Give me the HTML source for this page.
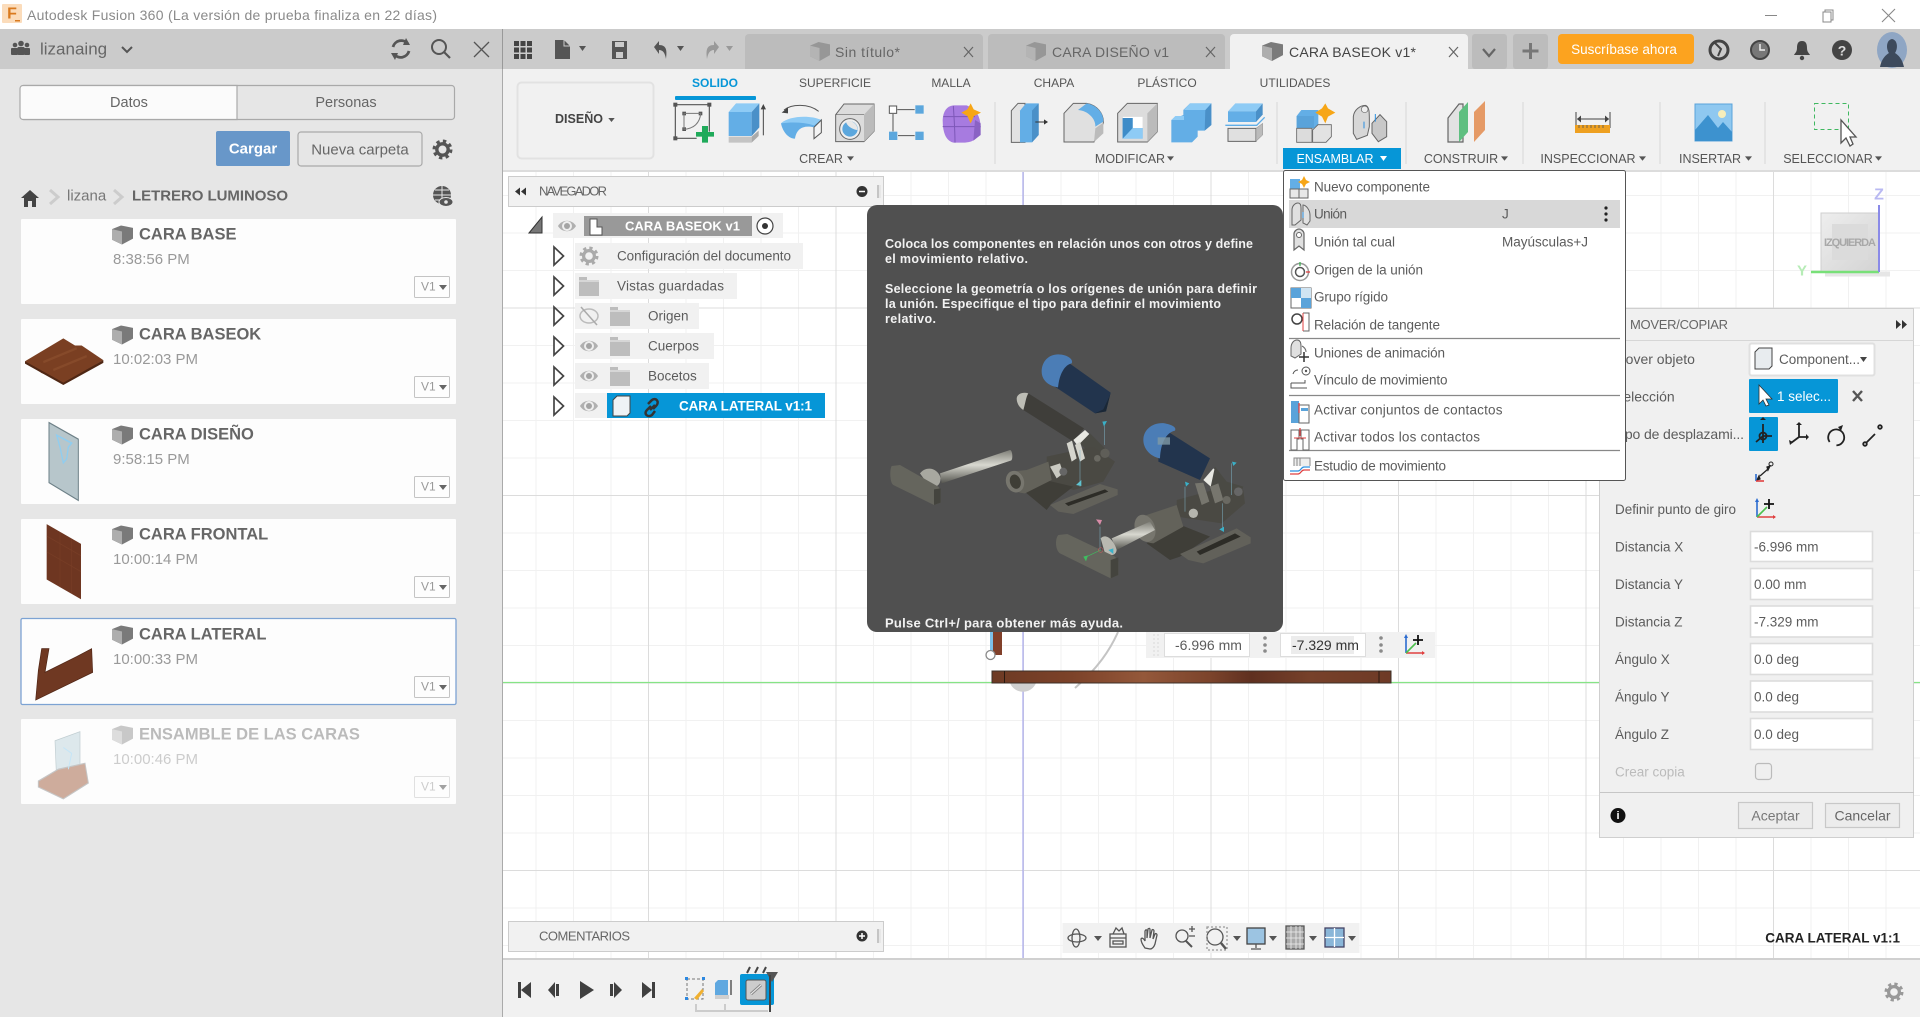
<!DOCTYPE html>
<html lang="es"><head><meta charset="utf-8"><title>Autodesk Fusion 360</title>
<style>
html,body{margin:0;padding:0;width:1920px;height:1017px;overflow:hidden;background:#fff}
svg{display:block;filter:blur(.35px)}
text{font-family:"Liberation Sans",sans-serif;dominant-baseline:central;white-space:pre}
.r{font-size:12.5px;fill:#555}
.rt{font-size:12px;fill:#555}
.m{font-size:13.5px;fill:#5c5c5c}
.p{font-size:13.5px;fill:#5c5c5c}
.ct{font-size:16.5px;font-weight:bold;fill:#666}
.tm{font-size:15px;fill:#999}
.tt{font-size:12.5px;font-weight:bold;fill:#f2f2f2}
.v{font-size:12px;fill:#999}
</style></head><body>
<svg xmlns="http://www.w3.org/2000/svg" width="1920" height="1017" viewBox="0 0 1920 1017">
<defs>
<pattern id="g" width="37.5" height="37.5" patternUnits="userSpaceOnUse" x="10.5" y="7.5"><path d="M.5 0V37.5M0 .5H37.5" fill="none" stroke="#f1f1f1" stroke-width="1"/></pattern>
<pattern id="G" width="187.5" height="187.5" patternUnits="userSpaceOnUse" x="85.5" y="120"><path d="M.5 0V187.5M0 .5H187.5" fill="none" stroke="#dcdcdc" stroke-width="1"/></pattern>
<linearGradient id="wood" x1="0" x2="1" y1="0" y2="0"><stop offset="0" stop-color="#6d3a24"/><stop offset=".2" stop-color="#7c4229"/><stop offset=".38" stop-color="#94583a"/><stop offset=".55" stop-color="#7b432b"/><stop offset=".65" stop-color="#5f3020"/><stop offset=".8" stop-color="#77412a"/><stop offset="1" stop-color="#6e3a26"/></linearGradient>
<linearGradient id="rod" x1="0" x2="0" y1="0" y2="1"><stop offset="0" stop-color="#7f7f78"/><stop offset=".45" stop-color="#d8d8d0"/><stop offset="1" stop-color="#55554f"/></linearGradient>
<linearGradient id="vc" x1="0" x2="1" y1="0" y2="1"><stop offset="0" stop-color="#eee"/><stop offset="1" stop-color="#d3d3d3"/></linearGradient>
<symbol id="cube" viewBox="0 0 21 16" preserveAspectRatio="none" overflow="visible"><path d="M0 3L9 0L21 2V11L10 16L0 12Z" fill="#7a7a7a"/><path d="M0 3L10 5V16L0 12Z" fill="#aeaeae"/></symbol>
<symbol id="folder" viewBox="0 0 20 20"><path d="M0 1h8v3h12v16H0z" fill="#bdbdbd"/><path d="M0 5h20" stroke="#eee"/></symbol>
<symbol id="eye" viewBox="0 0 20 20"><path d="M1 10C5 3 15 3 19 10C15 17 5 17 1 10Z" fill="#b0b0b0"/><circle cx="10" cy="10" r="5" fill="#eee"/><circle cx="10" cy="10" r="3" fill="#a4a4a4"/></symbol>
<symbol id="chev" viewBox="0 0 13 22"><path d="M1.5 2L11 11L1.5 20Z" fill="#fff" stroke="#444" stroke-width="1.7"/></symbol>
<symbol id="gear" viewBox="-10 -10 20 20"><circle r="5.4" fill="none" stroke="currentColor" stroke-width="3.2"/><circle r="8" fill="none" stroke="currentColor" stroke-width="3" stroke-dasharray="3.2 3.1"/></symbol>
<symbol id="dn" viewBox="0 0 8 5"><path d="M0 0H8L4 5Z" fill="#555"/></symbol>
<symbol id="pivot" viewBox="0 0 22 22" overflow="visible"><path d="M3 2V19" stroke="#2b6bd0" stroke-width="1.6"/><path d="M3 19H21" stroke="#e04040" stroke-width="1.6"/><path d="M3 19L13 9" stroke="#4dc04d" stroke-width="1.6"/><path d="M1 4L3 0L5 4Z" fill="#2b6bd0"/><path d="M19 17L22 19L19 21Z" fill="#e04040"/><path d="M15 1V11M10 6H20" stroke="#111" stroke-width="1.8"/></symbol>
</defs>

<!-- base -->
<rect width="1920" height="1017" fill="#fff"/>

<!-- viewport grid -->
<rect x="502" y="171" width="1418" height="787" fill="url(#g)"/>
<rect x="502" y="171" width="1418" height="787" fill="url(#G)"/>
<path d="M1023 171V958" stroke="#a9a9ee" stroke-width="1.2"/>
<path d="M502 682.5H1920" stroke="#86e486" stroke-width="1.2"/>

<!-- geometry in viewport -->
<path d="M1118 632C1110 650 1098 668 1075 688" fill="none" stroke="#c4c4c4" stroke-width="2"/>
<path d="M1010 683a14 14 0 0 0 26 0z" fill="#cfcfcf"/>
<rect x="990" y="632" width="3" height="24" fill="#7cc0e8"/>
<rect x="993" y="632" width="9" height="23" fill="#81402a"/>
<circle cx="990.5" cy="655" r="4.5" fill="#fff" stroke="#888" stroke-width="1.3"/>
<rect x="992" y="671" width="399" height="12" fill="url(#wood)" stroke="#3c3028" stroke-width="1"/>
<path d="M1004.5 671V683M1379 671V683" stroke="#2a1a10"/>

<!-- dim toolbar -->
<rect x="1146" y="632" width="289" height="26" fill="#f1f1f1"/>
<path d="M1154 634V656M1158 634V656" stroke="#d9d9d9" stroke-dasharray="2 2"/>
<rect x="1164.5" y="633.5" width="85" height="23" fill="#fff" stroke="#ddd"/>
<rect x="1280.5" y="633.5" width="85" height="23" fill="#fff" stroke="#ddd"/>
<rect x="1291" y="636" width="63" height="18" fill="#ececec"/>
<text x="1175" y="645" class="m" style="font-size:14px">-6.996 mm</text>
<text x="1292" y="645" class="m" style="font-size:14px;fill:#333">-7.329 mm</text>
<g fill="#8a8a8a"><circle cx="1265" cy="638" r="1.8"/><circle cx="1265" cy="645" r="1.8"/><circle cx="1265" cy="651" r="1.8"/><circle cx="1381" cy="638" r="1.8"/><circle cx="1381" cy="645" r="1.8"/><circle cx="1381" cy="651" r="1.8"/></g>
<use href="#pivot" x="1403" y="634" width="22" height="22"/>

<!-- viewcube -->
<rect x="1821" y="213" width="58" height="59" fill="url(#vc)" stroke="#cfcfcf"/>
<rect x="1832" y="224" width="36" height="36" fill="#dbdbdb"/>
<path d="M1825 274H1890" stroke="#e6e6e6" stroke-width="5"/>
<path d="M1811 272H1879" stroke="#78e078" stroke-width="2.5"/>
<path d="M1879 205V272" stroke="#8a8ae8" stroke-width="2"/>
<text x="1850" y="243" text-anchor="middle" style="font-size:11px;font-weight:bold;fill:#a8a8a8" textLength="52">IZQUIERDA</text>
<text x="1879" y="195" text-anchor="middle" style="font-size:16px;font-weight:bold;fill:#b9b9f2">Z</text>
<text x="1802" y="271" text-anchor="middle" style="font-size:15px;font-weight:bold;fill:#b6ecb6">Y</text>

<!-- navegador -->
<rect x="508.5" y="176.5" width="375" height="30" fill="#f1f1f1" stroke="#ccc"/>
<path d="M520 187.500L515 191.500L520 195.500ZM526 187.500L521 191.500L526 195.500Z" fill="#333"/>
<text x="539" y="191" style="font-size:13px;fill:#666" textLength="68">NAVEGADOR</text>
<circle cx="862" cy="191.500" r="5.500" fill="#333"/><path d="M859 191.500H865" stroke="#fff" stroke-width="1.500"/>
<path d="M878 185V198" stroke="#999"/><path d="M880 185V198" stroke="#ddd"/>

<!-- tree -->
<path d="M529 233L542 217V233Z" fill="#777" stroke="#333"/>
<rect x="553" y="213" width="230" height="25" fill="#f1f1f1"/>
<use href="#eye" x="557" y="216" width="20" height="20"/>
<rect x="584" y="216" width="168" height="20" fill="#999"/>
<path d="M590 219h7v8h5v8h-12z" fill="#fff" stroke="#555"/>
<text x="625" y="226" style="font-size:13px;font-weight:bold;fill:#fff" textLength="115">CARA BASEOK v1</text>
<circle cx="765" cy="226" r="8" fill="#fff" stroke="#444" stroke-width="1.200"/><circle cx="765" cy="226" r="3" fill="#333"/>

<use href="#chev" x="552.500" y="245" width="13" height="22"/>
<rect x="575" y="243" width="228" height="26" fill="#f1f1f1"/>
<use href="#gear" x="579" y="246" width="20" height="20" style="color:#aaa"/>
<text x="617" y="256" class="p" textLength="174">Configuración del documento</text>

<use href="#chev" x="552.500" y="275" width="13" height="22"/>
<rect x="575" y="273" width="162" height="26" fill="#f1f1f1"/>
<use href="#folder" x="579" y="276" width="20" height="20"/>
<text x="617" y="286" class="p" textLength="107">Vistas guardadas</text>

<use href="#chev" x="552.500" y="305" width="13" height="22"/>
<rect x="575" y="303" width="124" height="26" fill="#f1f1f1"/>
<ellipse cx="589" cy="316" rx="9" ry="7" fill="none" stroke="#bbb" stroke-width="1.500"/><path d="M581 307L597 325" stroke="#aaa" stroke-width="1.500"/>
<use href="#folder" x="610" y="306" width="20" height="20"/>
<text x="648" y="316" class="p">Origen</text>

<use href="#chev" x="552.500" y="335" width="13" height="22"/>
<rect x="575" y="333" width="139" height="26" fill="#f1f1f1"/>
<use href="#eye" x="579" y="336" width="20" height="20"/>
<use href="#folder" x="610" y="336" width="20" height="20"/>
<text x="648" y="346" class="p">Cuerpos</text>

<use href="#chev" x="552.500" y="365" width="13" height="22"/>
<rect x="575" y="363" width="134" height="26" fill="#f1f1f1"/>
<use href="#eye" x="579" y="366" width="20" height="20"/>
<use href="#folder" x="610" y="366" width="20" height="20"/>
<text x="648" y="376" class="p">Bocetos</text>

<use href="#chev" x="552.500" y="395" width="13" height="22"/>
<rect x="575" y="393" width="32" height="25" fill="#f1f1f1"/>
<use href="#eye" x="579" y="396" width="20" height="20"/>
<rect x="607" y="393" width="218" height="25" fill="#0696d7"/>
<path d="M613 400l4-4h13v17l-3 3h-14z" fill="#eef2f5" stroke="#444"/>
<g fill="none" stroke="#333" stroke-width="2.500"><path d="M648 404l4-4c4-3 8 2 4 6l-3 3"/><path d="M651 406l-4 4c-4 4 1 8 5 5l3-4"/><path d="M650 410l5-5"/></g>
<text x="679" y="406" style="font-size:13.500px;font-weight:bold;fill:#fff" textLength="133">CARA LATERAL v1:1</text>

<!-- comentarios -->
<rect x="508.500" y="921.500" width="375" height="30" fill="#f1f1f1" stroke="#ccc"/>
<text x="539" y="936" style="font-size:13px;fill:#666" textLength="91">COMENTARIOS</text>
<circle cx="862" cy="936" r="5.500" fill="#333"/><path d="M859 936H865M862 933V939" stroke="#fff" stroke-width="1.500"/>
<path d="M878 929V943" stroke="#999"/><path d="M880 929V943" stroke="#ddd"/>

<!-- nav bar -->
<rect x="1062.500" y="923" width="297" height="30" fill="#f1f1f1"/>
<g fill="none" stroke="#555" stroke-width="1.300">
<ellipse cx="1077" cy="938" rx="9" ry="4"/><ellipse cx="1076" cy="938" rx="4" ry="9"/>
<rect x="1110" y="934" width="16" height="13"/><path d="M1110 938H1126M1113 934l3-6 3 3 3-3 2 6"/><rect x="1113" y="941" width="10" height="3"/>
<path d="M1145 948c-3-4-4-7-4-9 1-2 3 0 4 2l0-10c1-2 2-1 2 0v7l1-9c1-1 2-1 2 1v8l2-8c1-1 2 0 2 1l-1 8 2-5c1-1 2 0 2 1l-2 9c-1 3-3 5-5 5z"/>
<circle cx="1182" cy="936" r="6"/><path d="M1186 941l6 6" stroke-width="2"/><path d="M1189 929h6M1192 926v6M1189 936h6"/>
<circle cx="1215" cy="937" r="8"/><path d="M1221 943l5 6" stroke-width="2.500"/><rect x="1207" y="927" width="20" height="23" stroke-dasharray="2 2" stroke="#999"/>
<rect x="1247" y="928" width="18" height="16" fill="#9cc4e2" stroke="#444"/><path d="M1256 944v4M1251 949h10"/>
<rect x="1286" y="926" width="18" height="23" fill="#aaa" stroke="#555"/><path d="M1286 932h18M1286 938h18M1286 944h18M1291 926v23M1296 926v23M1300 926v23" stroke="#eee" stroke-width=".8"/>
<rect x="1325" y="928" width="19" height="19" fill="#8ab6d8" stroke="#446"/><path d="M1325 937.500H1344M1334.500 928V947" stroke="#fff"/>
</g>
<use href="#dn" x="1094" y="936" width="8" height="5"/><use href="#dn" x="1233" y="936" width="8" height="5"/><use href="#dn" x="1269" y="936" width="8" height="5"/><use href="#dn" x="1309" y="936" width="8" height="5"/><use href="#dn" x="1348" y="936" width="8" height="5"/>

<text x="1900" y="938" text-anchor="end" style="font-size:13.500px;font-weight:bold;fill:#222">CARA LATERAL v1:1</text>

<!-- timeline -->
<rect x="502" y="958" width="1418" height="59" fill="#f1f1f1"/>
<path d="M502 959H1920" stroke="#d0d0d0" stroke-width="2"/>
<g fill="#404040">
<path d="M518 982h3v16h-3zM531 982v16l-10-8z"/>
<path d="M548 990l7-8v16zM556 984h3v12h-3z"/>
<path d="M580 981l14 9-14 9z"/>
<path d="M610 984h3v12h-3zM614 982l8 8-8 8z"/>
<path d="M642 982l10 8-10 8zM652 982h3v16h-3z"/>
</g>
<rect x="687" y="979" width="16" height="20" fill="none" stroke="#777" stroke-dasharray="3 2"/>
<path d="M694 998l8-9 2 2-7 9z" fill="#f0b030"/>
<g fill="#2c88e0"><rect x="685" y="977" width="3" height="3"/><rect x="702" y="977" width="3" height="3"/><rect x="685" y="997" width="3" height="3"/></g>
<path d="M715 983l3-3h10v15h-13z" fill="#5fa8e0"/><path d="M715 995h14v4h-14z" fill="#cfcfcf"/><path d="M731 995V980" stroke="#333" stroke-width="1.200"/>
<rect x="740" y="974" width="34" height="31" rx="2" fill="#0696d7"/>
<rect x="746" y="980" width="20" height="20" rx="2" fill="#ccc" stroke="#555"/>
<path d="M751 994l10-9" stroke="#888" stroke-width="3" fill="none"/><path d="M751 994l10-9" stroke="#eee" stroke-width="1" fill="none"/>
<path d="M747 973l3-6M755 973l3-6M763 973l3-6" stroke="#444" stroke-width="2"/>
<path d="M766 972h12l-6 10z" fill="#555"/><path d="M770 975V1012" stroke="#444" stroke-width="2"/>
<path d="M696 1004v7h54M725 1004v7" fill="none" stroke="#ccc" stroke-width="2"/>
<path d="M750 1011h18" stroke="#ccc" stroke-width="2" />
<use href="#gear" x="1884" y="982" width="20" height="20" style="color:#999"/>

<!-- left divider, left panel -->
<rect x="0" y="69" width="502" height="948" fill="#e6e6e6"/>
<path d="M502.500 69V1017" stroke="#aaa"/>

<rect x="20.500" y="85.500" width="434" height="34" rx="3" fill="#e6e6e6" stroke="#a9a9a9" stroke-width="1.200"/>
<path d="M23 85.500h214v34h-214a3 3 0 0 1-3-3v-28a3 3 0 0 1 3-3z" fill="#fbfbfb" stroke="#a9a9a9" stroke-width="1.200"/>
<text x="129" y="103" text-anchor="middle" style="font-size:14.500px;fill:#666">Datos</text>
<text x="346" y="103" text-anchor="middle" style="font-size:14.500px;fill:#666">Personas</text>
<rect x="216" y="131" width="74" height="35" rx="2" fill="#6897c9"/>
<text x="253" y="149" text-anchor="middle" style="font-size:15px;font-weight:bold;fill:#fff">Cargar</text>
<rect x="298" y="132" width="124" height="34" rx="3" fill="#e6e6e6" stroke="#a9a9a9" stroke-width="1.200"/>
<text x="360" y="150" text-anchor="middle" style="font-size:15px;fill:#666">Nueva carpeta</text>
<use href="#gear" x="432" y="139" width="21" height="21" style="color:#555"/>

<path d="M21 198l9-8 9 8h-3v9h-4v-6h-4v6h-4v-9z" fill="#444"/>
<path d="M50 190l8 7-8 7" fill="none" stroke="#ccc" stroke-width="3"/>
<text x="67" y="196" style="font-size:15px;fill:#777">lizana</text>
<path d="M114 190l8 7-8 7" fill="none" stroke="#ccc" stroke-width="3"/>
<text x="132" y="196" style="font-size:15px;font-weight:bold;fill:#666" textLength="156">LETRERO LUMINOSO</text>
<circle cx="442" cy="195" r="9" fill="#555"/><path d="M433 195h18M442 186v18M435 190h14M435 200h14" stroke="#e6e6e6"/><ellipse cx="446" cy="202" rx="7" ry="4.500" fill="#555" stroke="#e6e6e6"/><circle cx="446" cy="202" r="1.800" fill="#e6e6e6"/>

<!-- cards -->
<g fill="#fdfdfd"><rect x="21" y="219" width="435" height="85" rx="1"/><rect x="21" y="319" width="435" height="85" rx="1"/><rect x="21" y="419" width="435" height="85" rx="1"/><rect x="21" y="519" width="435" height="85" rx="1"/><rect x="21" y="719" width="435" height="85" rx="1"/></g>
<rect x="21" y="618.500" width="435" height="86" rx="1.500" fill="#fdfdfd" stroke="#7da3d3" stroke-width="1.300"/>

<use href="#cube" x="112" y="225.500" width="21" height="19"/>
<use href="#cube" x="112" y="325.500" width="21" height="19"/>
<use href="#cube" x="112" y="425.500" width="21" height="19"/>
<use href="#cube" x="112" y="525.500" width="21" height="19"/>
<use href="#cube" x="112" y="625.500" width="21" height="19"/>
<use href="#cube" x="112" y="725.500" width="21" height="19" opacity=".4"/>

<text x="139" y="234.500" class="ct">CARA BASE</text>
<text x="113" y="259.500" class="tm">8:38:56 PM</text>
<text x="139" y="334.500" class="ct">CARA BASEOK</text>
<text x="113" y="359.700" class="tm">10:02:03 PM</text>
<text x="139" y="434.500" class="ct">CARA DISEÑO</text>
<text x="113" y="459.700" class="tm">9:58:15 PM</text>
<text x="139" y="534.500" class="ct">CARA FRONTAL</text>
<text x="113" y="559.700" class="tm">10:00:14 PM</text>
<text x="139" y="634.500" class="ct">CARA LATERAL</text>
<text x="113" y="659.700" class="tm">10:00:33 PM</text>
<text x="139" y="734.500" class="ct" style="fill:#bbb">ENSAMBLE DE LAS CARAS</text>
<text x="113" y="759.700" class="tm" style="fill:#ccc">10:00:46 PM</text>

<g fill="#fdfdfd" stroke="#c4c4c4" stroke-width="1"><rect x="414.500" y="276.500" width="35" height="21" rx="1"/><rect x="414.500" y="376.500" width="35" height="21" rx="1"/><rect x="414.500" y="476.500" width="35" height="21" rx="1"/><rect x="414.500" y="576.500" width="35" height="21" rx="1"/><rect x="414.500" y="676.500" width="35" height="21" rx="1"/><rect x="414.500" y="776.500" width="35" height="21" rx="1" opacity=".5"/></g>
<text x="421" y="286.500" class="v">V1</text><text x="421" y="386.500" class="v">V1</text><text x="421" y="486.500" class="v">V1</text><text x="421" y="586.500" class="v">V1</text><text x="421" y="686.500" class="v">V1</text><text x="421" y="786.500" class="v" style="fill:#ccc">V1</text>
<g fill="#666"><path d="M439 285h8l-4 5zM439 385h8l-4 5zM439 485h8l-4 5zM439 585h8l-4 5zM439 685h8l-4 5z"/><path d="M439 785h8l-4 5z" opacity=".6"/></g>

<!-- thumbnails -->
<g transform="translate(0 200) scale(.33333 .3953)">
<path d="M75 408L190 350L225 368L245 368L310 405L190 465L150 445L125 438Z" fill="#7a3f22"/>
<path d="M75 408L190 462L310 405L310 412L190 468L75 414Z" fill="#4f2714"/>
<path d="M130 410L230 375M160 430L260 395" stroke="#8f5230" stroke-width="6" opacity=".6"/>
<path d="M147 563L235 605V760L147 715Z" fill="#b7c6cb" stroke="#6d8087" stroke-width="3"/>
<path d="M170 595L215 615L205 625L200 655L190 665L180 625Z" fill="none" stroke="#8fcdf0" stroke-width="4"/>
<path d="M140 820L243 870V1010L140 960Z" fill="#6e3621"/>
<path d="M140 850L243 900M140 890L243 940M180 840V980M215 858V995" stroke="#8a4c30" stroke-width="2" opacity=".35"/>
<path d="M125 1135L147 1135L135 1195L230 1155L275 1135L278 1195L107 1265L115 1190Z" fill="#6f3822" stroke="#4f2515" stroke-width="2"/>
<g opacity=".55">
<path d="M165 1368L240 1345V1450L170 1470Z" fill="#c4d8df" stroke="#8fa6ad" stroke-width="2"/>
<path d="M115 1470L175 1440L255 1425L265 1475L190 1515L115 1485Z" fill="#a96b4e" stroke="#999" stroke-width="3"/>
<path d="M190 1385L215 1400L205 1440" stroke="#9ad3f2" stroke-width="3" fill="none"/>
</g>
</g>

<!-- top bar -->
<rect x="0" y="29" width="1920" height="40" fill="#cbcbcb"/>
<path d="M502.500 29V69" stroke="#999"/>
<g fill="#555"><circle cx="15" cy="45" r="2.300"/><circle cx="21" cy="43.500" r="2.800"/><circle cx="27" cy="45" r="2.300"/><rect x="11" y="48" width="7" height="7" rx="1"/><rect x="17.500" y="47" width="7" height="8" rx="1"/><rect x="24" y="48" width="6" height="7" rx="1"/></g>
<text x="40" y="49" style="font-size:17px;fill:#666">lizanaing</text>
<path d="M122 47l5 5 5-5" fill="none" stroke="#555" stroke-width="2"/>
<g fill="none" stroke="#555"><path d="M393 47a8.500 8.500 0 0 1 15-3M409 51a8.500 8.500 0 0 1-15 3" stroke-width="2.800"/><path d="M406 38l4 7h-7zM395 60l-4-7h7z" fill="#555" stroke="none"/><circle cx="439" cy="47" r="7" stroke-width="2"/><path d="M444 52l6 6" stroke-width="2.200"/><path d="M474 42l15 15M489 42l-15 15" stroke-width="1.300"/></g>
<g fill="#444"><rect x="514" y="41" width="5" height="5"/><rect x="520.500" y="41" width="5" height="5"/><rect x="527" y="41" width="5" height="5"/><rect x="514" y="47.500" width="5" height="5"/><rect x="520.500" y="47.500" width="5" height="5"/><rect x="527" y="47.500" width="5" height="5"/><rect x="514" y="54" width="5" height="5"/><rect x="520.500" y="54" width="5" height="5"/><rect x="527" y="54" width="5" height="5"/></g>
<path d="M555 40h9l6 6v13h-15z" fill="#555"/><path d="M564 40v6h6" fill="none" stroke="#ccc"/><path d="M579 46h7l-3.500 5z" fill="#555"/>
<path d="M612 41h15v18h-15z" fill="#555"/><rect x="615" y="42" width="9" height="5" fill="#cbcbcb"/><rect x="616" y="52" width="7" height="6" fill="#cbcbcb"/>
<path d="M654 47l5-6v4c8 0 8 6 7 14-1-6-3-9-7-9v4z" fill="#555"/><path d="M677 46h7l-3.500 5z" fill="#555"/>
<path d="M719 47l-5-6v4c-8 0-8 6-7 14 1-6 3-9 7-9v4z" fill="#999"/><path d="M726 46h7l-3.500 5z" fill="#999"/>

<!-- tabs -->
<path d="M745 69V38a4 4 0 0 1 4-4h230a4 4 0 0 1 4 4V69z" fill="#bcbcbc"/>
<path d="M988 69V38a4 4 0 0 1 4-4h229a4 4 0 0 1 4 4V69z" fill="#bcbcbc"/>
<path d="M1230 69V38a4 4 0 0 1 4-4h230a4 4 0 0 1 4 4V69z" fill="#f1f1f1"/>
<rect x="1472" y="34" width="35" height="35" rx="3" fill="#bcbcbc"/>
<rect x="1513" y="34" width="35" height="35" rx="3" fill="#bcbcbc"/>
<use href="#cube" x="810" y="42" width="20" height="19" opacity=".55"/>
<use href="#cube" x="1026" y="42" width="20" height="19" opacity=".55"/>
<use href="#cube" x="1262" y="42" width="21" height="19"/>
<text x="835" y="52" style="font-size:14px;fill:#666" textLength="65">Sin título*</text>
<text x="1052" y="52" style="font-size:14px;fill:#666" textLength="117">CARA DISEÑO v1</text>
<text x="1289" y="52" style="font-size:14px;fill:#444" textLength="127">CARA BASEOK v1*</text>
<g fill="none" stroke="#666" stroke-width="1.200"><path d="M964 47l9 10M973 47l-9 10M1206 47l9 10M1215 47l-9 10M1449 47l9 10M1458 47l-9 10"/></g>
<path d="M1483 49l6 7 6-7" fill="none" stroke="#666" stroke-width="2.200"/>
<path d="M1530.500 43v16M1522.500 51h16" stroke="#777" stroke-width="3"/>
<rect x="1558" y="34" width="136" height="30" rx="4" fill="#fca31f"/>
<text x="1624" y="49.500" text-anchor="middle" style="font-size:13.500px;fill:#fff">Suscríbase ahora</text>
<g fill="none" stroke="#444">
<circle cx="1719" cy="50" r="9" stroke-width="3"/><path d="M1715 43l6 6-3 7" stroke-width="2"/>
<circle cx="1760" cy="50" r="9" stroke-width="2" fill="#777"/><path d="M1760 44v6h5" stroke="#eee" stroke-width="1.500"/>
</g>
<path d="M1802 41c4 0 5 3 5 7 0 4 2 5 3 7h-16c1-2 3-3 3-7 0-4 1-7 5-7z" fill="#444"/><circle cx="1802" cy="58" r="2.200" fill="#444"/>
<circle cx="1842" cy="50" r="10" fill="#444"/><text x="1842" y="50.500" text-anchor="middle" style="font-size:14px;font-weight:bold;fill:#ddd">?</text>
<ellipse cx="1892" cy="50" rx="15" ry="18" fill="#8fa6c4"/><path d="M1880 67c2-9 6-12 9-14-3-4-3-13 3-14 6 1 6 10 3 14 3 2 7 5 9 14z" fill="#3d4a5c"/>

<!-- title bar -->
<rect x="2" y="4" width="20" height="19" rx="1" fill="#fbdcbb"/>
<text x="12" y="14" text-anchor="middle" style="font-size:16px;font-weight:bold;fill:#d97a1f">F</text>
<rect x="15" y="20" width="5" height="1.500" fill="#d97a1f"/>
<text x="27" y="15" style="font-size:14px;fill:#8a8a8a" textLength="410">Autodesk Fusion 360 (La versión de prueba finaliza en 22 días)</text>
<path d="M1765 15.500H1777" stroke="#888"/>
<path d="M1823 12h8v10h-8z M1825 12v-2h8v10h-2" fill="none" stroke="#888"/>
<path d="M1882 9l13 13M1895 9l-13 13" stroke="#888" stroke-width="1.100"/>

<!-- ribbon -->
<rect x="503" y="69" width="1417" height="102" fill="#f1f1f1"/>
<path d="M503 171H1920" stroke="#dcdcdc" stroke-width="2"/>
<g stroke="#e0e0e0" stroke-width="1.500"><path d="M995 102V164M1277 102V164M1406 102V164M1523 102V164M1660 102V164M1765 102V164"/></g>
<rect x="517.500" y="82.500" width="136" height="76" rx="4" fill="#f1f1f1" stroke="#e2e2e2" stroke-width="2"/>
<text x="579" y="119" text-anchor="middle" style="font-size:12.500px;font-weight:bold;fill:#444">DISEÑO</text><use href="#dn" x="608" y="118" width="7" height="4"/>
<text x="715" y="83" text-anchor="middle" class="rt" style="fill:#0696d7;font-weight:bold">SOLIDO</text>
<rect x="675" y="96" width="81" height="4" rx="1" fill="#0696d7"/>
<text x="835" y="83" text-anchor="middle" class="rt">SUPERFICIE</text>
<text x="951" y="83" text-anchor="middle" class="rt">MALLA</text>
<text x="1054" y="83" text-anchor="middle" class="rt">CHAPA</text>
<text x="1167" y="83" text-anchor="middle" class="rt">PLÁSTICO</text>
<text x="1295" y="83" text-anchor="middle" class="rt">UTILIDADES</text>

<text x="821" y="159" text-anchor="middle" class="r">CREAR</text><use href="#dn" x="847" y="156" width="7" height="5"/>
<text x="1130" y="159" text-anchor="middle" class="r">MODIFICAR</text><use href="#dn" x="1167" y="156" width="7" height="5"/>
<rect x="1283" y="148" width="118" height="21" fill="#0696d7"/>
<text x="1335" y="159" text-anchor="middle" class="r" style="fill:#fff">ENSAMBLAR</text><path d="M1380 156h7l-3.500 5z" fill="#fff"/>
<text x="1461" y="159" text-anchor="middle" class="r">CONSTRUIR</text><use href="#dn" x="1501" y="156" width="7" height="5"/>
<text x="1588" y="159" text-anchor="middle" class="r">INSPECCIONAR</text><use href="#dn" x="1639" y="156" width="7" height="5"/>
<text x="1710" y="159" text-anchor="middle" class="r">INSERTAR</text><use href="#dn" x="1745" y="156" width="7" height="5"/>
<text x="1828" y="159" text-anchor="middle" class="r">SELECCIONAR</text><use href="#dn" x="1875" y="156" width="7" height="5"/>

<!-- crear icons -->
<g transform="translate(660 90) scale(.33333)">
<path d="M46 44H148V125M46 44V145H110" fill="none" stroke="#555" stroke-width="3.500"/>
<g fill="#555"><rect x="40" y="38" width="12" height="12"/><rect x="142" y="38" width="12" height="12"/><rect x="40" y="139" width="12" height="12"/><rect x="67" y="65" width="11" height="11"/><rect x="116" y="65" width="11" height="11"/><rect x="67" y="112" width="11" height="11"/></g>
<path d="M72 70H122C120 100 100 116 72 118Z" fill="none" stroke="#777" stroke-width="3"/>
<path d="M126 108h18v18h18v14h-18v18h-18v-18h-18v-14h18z" fill="#1faa5a"/>
<path d="M206 66L228 40H298L275 66Z" fill="#8ecbf5"/><path d="M206 66H275V138H206Z" fill="#63aee6"/><path d="M275 66L298 40V112L275 138Z" fill="#4a90c8"/>
<path d="M206 140H275V158H206Z" fill="#c4c4c4"/><path d="M275 140L296 122V138L275 158Z" fill="#aaa"/>
<path d="M310 136V52" stroke="#444" stroke-width="3"/><path d="M302 58L310 42L318 58Z" fill="#444"/>
<path d="M372 60C395 42 445 40 476 64" fill="none" stroke="#555" stroke-width="3"/><path d="M365 68L384 52V70Z" fill="#444"/>
<path d="M363 100C385 82 450 78 484 90L462 112C430 105 410 115 405 146C385 146 368 125 363 100Z" fill="#63aee6"/>
<path d="M363 100C385 78 450 74 484 90L462 106C430 96 395 96 363 100Z" fill="#8ecbf5"/>
<path d="M484 90V128L462 146V112Z" fill="#f4f4f4" stroke="#555" stroke-width="3"/>
<path d="M527 74L552 42H642V124L612 155H527Z" fill="#dcdcdc" stroke="#666" stroke-width="3"/><path d="M612 74L642 42V124L612 155Z" fill="#bbb"/><path d="M527 74H612" stroke="#666" stroke-width="2"/>
<circle cx="570" cy="117" r="31" fill="#eee" stroke="#666" stroke-width="3"/><circle cx="570" cy="117" r="23" fill="#5ca7dd"/><path d="M558 96a24 24 0 0 1 34 24c-12-1-30-10-34-24z" fill="#e8e8e8"/>
<rect x="688" y="48" width="22" height="22" fill="#fff" stroke="#555" stroke-width="3"/><rect x="766" y="46" width="25" height="25" fill="#5ca7dd"/><rect x="687" y="125" width="25" height="25" fill="#5ca7dd"/><rect x="766" y="125" width="25" height="25" fill="#5ca7dd"/>
<path d="M712 59H764M699 72V124M714 137H764" stroke="#555" stroke-width="3"/>
<path d="M848 90Q850 50 880 46H920Q960 60 962 110Q960 155 915 158H880Q848 150 848 90Z" fill="#a77be0"/><path d="M848 110H962M880 48C882 80 885 120 885 158M850 80H945" stroke="#7d57b8" stroke-width="3" fill="none"/><path d="M945 90L962 100V135L940 152Z" fill="#8a62c4"/>
<path d="M932 40L941 58L963 68L942 78L932 100L922 78L904 68L922 58Z" fill="#f7a616"/>
</g>

<!-- modificar & ensamblar icons -->
<g transform="translate(990 90) scale(.33333)">
<path d="M64 62L84 40H105V157H64Z" fill="#e2e2e2" stroke="#666" stroke-width="3"/>
<path d="M90 62L108 40H146V135L126 157H90Z" fill="#63aee6"/><path d="M126 62L146 40V135L126 157Z" fill="#4a90c8"/>
<path d="M136 96H168" stroke="#333" stroke-width="3"/><path d="M162 88L174 96L162 104Z" fill="#333"/>
<path d="M222 70L250 40H290C320 45 342 70 340 100L312 156H222Z" fill="#e0e0e0" stroke="#666" stroke-width="3"/>
<path d="M264 60L290 40C320 45 342 70 340 95L316 110C318 88 295 62 264 60Z" fill="#63aee6"/>
<path d="M316 115L340 98V130L312 156Z" fill="#bbb"/>
<path d="M383 70L412 40H502V125L472 156H383Z" fill="#dcdcdc" stroke="#666" stroke-width="3"/><path d="M472 70L502 40V125L472 156Z" fill="#bbb"/>
<rect x="398" y="80" width="60" height="66" fill="#fff" stroke="#ddd"/><path d="M398 84H428V114H458V146H398Z" fill="#63aee6"/><path d="M398 146L428 114H458V146Z" fill="#8ecbf5"/><path d="M398 84H428V114L398 146Z" fill="#3e8cc8"/>
<path d="M544 90L580 75V60L600 40H664V105L644 122H623V140L606 157H544Z" fill="#63aee6"/>
<path d="M646 60L664 40V105L644 122Z" fill="#4a90c8"/><path d="M582 60L600 40H664L646 60Z" fill="#8ecbf5"/><path d="M544 90L556 78H582V90Z" fill="#8ecbf5"/>
<path d="M714 64L736 40H818L798 64Z" fill="#8ecbf5"/><rect x="714" y="64" width="84" height="32" fill="#63aee6"/><path d="M798 64L818 40V74L798 96Z" fill="#4a90c8"/>
<path d="M706 106H800L824 82" stroke="#5faee8" stroke-width="4" fill="none"/>
<path d="M714 115H798V154H714Z" fill="#e0e0e0" stroke="#666" stroke-width="3"/><path d="M798 115L818 100V135L798 154Z" fill="#bbb" stroke="#666"/>
<path d="M920 78L934 60H985V115H920Z" fill="#63aee6"/><path d="M920 78H972V115H920Z" fill="#5aa3da"/>
<path d="M920 115H966V157H920Z" fill="#dcdcdc" stroke="#666" stroke-width="2.500"/><path d="M968 120L984 104H1024V140L1008 157H968Z" fill="#e2e2e2" stroke="#666" stroke-width="2.500"/>
<path d="M1006 40L1014 55L1036 68L1014 80L1006 100L996 80L976 68L996 55Z" fill="#f7a616"/>
<path d="M1090 80C1092 60 1110 46 1126 46C1140 50 1138 70 1138 110L1132 136L1100 148L1090 130Z" fill="#d7d7d7" stroke="#666" stroke-width="3"/>
<circle cx="1124" cy="58" r="10" fill="#eee" stroke="#666" stroke-width="2"/>
<path d="M1146 100L1170 74L1190 95V140L1165 155L1146 130Z" fill="#c8c8c8" stroke="#666" stroke-width="3"/>
<path d="M1122 95V115M1156 72V95" stroke="#2b8fe0" stroke-width="3"/>
</g>

<!-- construir etc -->
<path d="M1448 118L1459 104H1463V142H1448Z" fill="#e2e2e2" stroke="#666" stroke-width="1.200"/>
<path d="M1459 142V112L1468 102V132Z" fill="#5ebf80"/>
<path d="M1474 142V112L1485 101V130Z" fill="#e59a66"/>
<path d="M1576 112V128M1610 112V128" stroke="#444"/><path d="M1577 119H1609" stroke="#444"/><path d="M1581 115.500l-4 3.500 4 3.500zM1605 115.500l4 3.500-4 3.500z" fill="#444"/>
<rect x="1575" y="125" width="35" height="8" fill="#eea020"/><path d="M1579 125v3M1583 125v3M1587 125v3M1591 125v3M1595 125v3M1599 125v3M1603 125v3" stroke="#555" stroke-width=".8"/>
<rect x="1695" y="104" width="37" height="37" fill="#8fc8f0"/><rect x="1695" y="104" width="37" height="37" fill="none" stroke="#5aa3da"/>
<path d="M1695 141V130L1708 115L1718 128L1723 122L1732 132V141Z" fill="#3d92cf"/><circle cx="1722" cy="114" r="4" fill="#f7eebb"/>
<rect x="1814.500" y="103.500" width="34" height="26" fill="none" stroke="#3fb860" stroke-dasharray="4 3"/>
<path d="M1841 120V143L1846 138L1850 146L1853 144L1850 137H1856Z" fill="#fff" stroke="#555" stroke-width="1.300"/>

<!-- mover/copiar panel -->
<rect x="1599.500" y="308.500" width="314" height="529" fill="#f0f0f0" stroke="#cfcfcf"/>
<path d="M1600 340.500H1914" stroke="#d6d6d6"/>
<path d="M1600 792.500H1914" stroke="#c6c6c6"/>
<text x="1630" y="324.500" style="font-size:13px;fill:#666" textLength="98">MOVER/COPIAR</text>
<path d="M1896 320l5 4.500-5 4.500zM1902 320l5 4.500-5 4.500z" fill="#333"/>
<text x="1614" y="359" class="p" style="font-size:14px">Mover objeto</text>
<text x="1614" y="396.500" class="p" style="font-size:14px">Selección</text>
<text x="1614" y="434" class="p" style="font-size:14px" textLength="130">Tipo de desplazami...</text>
<rect x="1749.500" y="343.500" width="125" height="32" rx="2" fill="#fff" stroke="#e0e0e0" stroke-width="2"/>
<path d="M1755 352l4-4h13v18l-3 3h-14z" fill="#e8ecef" stroke="#444"/>
<text x="1779" y="359.500" class="p" style="font-size:13.500px">Component...</text>
<path d="M1860 357h7l-3.500 5z" fill="#444"/>
<rect x="1749" y="379" width="89" height="34" rx="1" fill="#0696d7"/>
<path d="M1759 385V404L1763 400L1766 406L1769 405L1766 399H1772Z" fill="#fff" stroke="#333" stroke-width=".8"/>
<text x="1777" y="396.500" style="font-size:13.500px;fill:#fff">1 selec...</text>
<path d="M1853 391l9 10M1862 391l-9 10" stroke="#555" stroke-width="2.400"/>
<rect x="1749" y="417" width="29" height="34" rx="1" fill="#0696d7"/>
<g fill="none" stroke="#222" stroke-width="1.800"><path d="M1763 424V443M1763 436l-7 6M1763 436l9 0"/><circle cx="1763" cy="436" r="3.500"/><path d="M1799 425V437L1791 443M1799 437H1808"/><path d="M1826 436a8 8 0 1 1 3 7" transform="rotate(-40 1836 434)"/><path d="M1866 443l9-9" /><circle cx="1880" cy="427" r="1.800"/><circle cx="1865" cy="444" r="1.800"/></g>
<path d="M1760 420l3-3 3 3zM1799 422l-3 3h6zM1789 440l1 5 3-3zM1806 434l3 3-3 3zM1843 425l-2 6-3-4z" fill="#222"/>
<path d="M1760 476l8-7M1757 480l3-1-1-3zM1770 466l-3 1 1 3z" fill="#222" stroke="#222" stroke-width="1.300"/><circle cx="1771" cy="464" r="2" fill="none" stroke="#222"/>
<path d="M1756 481V474" stroke="#2b6bd0" stroke-width="1.600"/><path d="M1756 481H1764" stroke="#e04040" stroke-width="1.600"/>
<text x="1615" y="509.500" class="p" textLength="121">Definir punto de giro</text>
<use href="#pivot" x="1754" y="498" width="22" height="22"/>
<g fill="#fff" stroke="#dcdcdc" stroke-width="1.600"><rect x="1750.500" y="531.500" width="122" height="30"/><rect x="1750.500" y="568.500" width="122" height="31"/><rect x="1750.500" y="606" width="122" height="31"/><rect x="1750.500" y="643.500" width="122" height="31"/><rect x="1750.500" y="681" width="122" height="31"/><rect x="1750.500" y="718.500" width="122" height="31"/></g>
<text x="1615" y="547" class="p">Distancia X</text><text x="1754" y="547" class="p">-6.996 mm</text>
<text x="1615" y="584.500" class="p">Distancia Y</text><text x="1754" y="584.500" class="p">0.00 mm</text>
<text x="1615" y="622" class="p">Distancia Z</text><text x="1754" y="622" class="p">-7.329 mm</text>
<text x="1615" y="659.500" class="p">Ángulo X</text><text x="1754" y="659.500" class="p">0.0 deg</text>
<text x="1615" y="697" class="p">Ángulo Y</text><text x="1754" y="697" class="p">0.0 deg</text>
<text x="1615" y="734.500" class="p">Ángulo Z</text><text x="1754" y="734.500" class="p">0.0 deg</text>
<text x="1615" y="772" class="p" style="fill:#bbb">Crear copia</text>
<rect x="1755.500" y="763.500" width="16" height="16" rx="3" fill="#efefef" stroke="#bbb" stroke-width="1.200"/>
<circle cx="1618" cy="815.500" r="7.500" fill="#111"/><text x="1618" y="816" text-anchor="middle" style="font-size:11px;font-weight:bold;fill:#fff">i</text>
<rect x="1738.500" y="802.500" width="74" height="26" fill="#ececec" stroke="#c8c8c8" stroke-width="1.200"/>
<text x="1775.500" y="815.500" text-anchor="middle" style="font-size:14px;fill:#777">Aceptar</text>
<rect x="1825.500" y="803.500" width="74" height="24" fill="#ececec" stroke="#c8c8c8" stroke-width="1.200"/>
<text x="1862.500" y="815.500" text-anchor="middle" style="font-size:14px;fill:#666">Cancelar</text>

<!-- ensamblar menu -->
<rect x="1283.500" y="170.500" width="342" height="310" rx="2" fill="#fff" stroke="#555"/>
<rect x="1289" y="200" width="331" height="28" fill="#d8d8d8"/>
<text x="1314" y="187" class="m" textLength="116">Nuevo componente</text>
<text x="1314" y="214" class="m" textLength="33">Unión</text>
<text x="1502" y="214" class="m">J</text>
<g fill="#222"><circle cx="1606" cy="208" r="1.600"/><circle cx="1606" cy="214" r="1.600"/><circle cx="1606" cy="220" r="1.600"/></g>
<text x="1314" y="242" class="m" textLength="81">Unión tal cual</text>
<text x="1502" y="242" class="m" textLength="86">Mayúsculas+J</text>
<text x="1314" y="270" class="m" textLength="109">Origen de la unión</text>
<text x="1314" y="297" class="m" textLength="74">Grupo rígido</text>
<text x="1314" y="325" class="m" textLength="126">Relación de tangente</text>
<path d="M1289 338.500H1620M1289 395.500H1620M1289 450.500H1620" stroke="#888" stroke-width="1.200"/>
<text x="1314" y="353" class="m" textLength="131">Uniones de animación</text>
<text x="1314" y="380" class="m" textLength="133.500">Vínculo de movimiento</text>
<text x="1314" y="410" class="m" textLength="188.500">Activar conjuntos de contactos</text>
<text x="1314" y="437" class="m" textLength="166">Activar todos los contactos</text>
<text x="1314" y="466" class="m" textLength="132">Estudio de movimiento</text>

<!-- menu icons -->
<g>
<rect x="1290" y="179" width="10" height="10" fill="#63aee6"/><rect x="1290" y="189" width="9" height="9" fill="#e8e8e8" stroke="#666"/><rect x="1299" y="189" width="9" height="9" fill="#e8e8e8" stroke="#666"/><path d="M1304 176l2 4 4 2-4 2-2 4-2-4-4-2 4-2z" fill="#f7a616"/>
<path d="M1292 225V210c0-4 3-7 6-7 2 0 3 2 3 5v12l-6 5zM1303 205c3 0 7 5 7 10v6l-3 4-4-2z" fill="#e0e0e0" stroke="#666"/><path d="M1303 212v6" stroke="#2b8fe0"/>
<path d="M1294 250V234c0-3 3-5 5-5s5 2 5 5v16l-5-4z" fill="#e0e0e0" stroke="#666" stroke-width="1.200"/><circle cx="1299" cy="235" r="2.500" fill="#fff" stroke="#666"/>
<circle cx="1300" cy="272" r="8.500" fill="none" stroke="#999" stroke-width="1.500"/><circle cx="1300" cy="272" r="4.500" fill="none" stroke="#555" stroke-width="1.500"/><path d="M1300 262v4" stroke="#3cb050" stroke-width="1.300"/><path d="M1306 272h4" stroke="#e04040" stroke-width="1.300"/>
<rect x="1291" y="288" width="20" height="20" fill="#fff" stroke="#666"/><path d="M1301 298h10v10h-10z" fill="#5aa3da"/><path d="M1301 288h10v10h-10z" fill="#d0e4f2"/><rect x="1291" y="288" width="10" height="10" fill="#5aa3da"/>
<circle cx="1297" cy="319" r="5" fill="none" stroke="#444" stroke-width="1.500"/><path d="M1303 313h6v18h-6" fill="none" stroke="#666"/><path d="M1303 313v18" stroke="#e04040"/>
<path d="M1291 356v-8c0-5 3-8 6-8s4 3 4 6v8l-6 4zM1302 346c2 1 4 3 4 6" fill="#e0e0e0" stroke="#666"/><path d="M1304 352v10M1299 357h10" stroke="#333" stroke-width="1.500"/>
<circle cx="1306" cy="371" r="4" fill="none" stroke="#555"/><circle cx="1306" cy="371" r="1.200" fill="#555"/><path d="M1291 383h14v-3M1291 383v5h16" fill="none" stroke="#555"/><path d="M1293 374a5 5 0 0 1 5-4" fill="none" stroke="#555"/>
<rect x="1291" y="401" width="8" height="22" fill="#5aa3da"/><rect x="1299" y="405" width="10" height="18" fill="#fff" stroke="#666"/><path d="M1299 403v10" stroke="#e04040" stroke-width="1.300"/><rect x="1301" y="408" width="7" height="3" fill="#5aa3da"/>
<path d="M1291 450v-20h8v9h-2v11zM1309 450v-20h-8v9h2v11z" fill="#fff" stroke="#666"/><path d="M1300 428v8" stroke="#e04040" stroke-width="1.300"/><path d="M1294 438h12" stroke="#e04040"/>
<path d="M1294 466v-8h16v8M1297 458v8M1300 458v8" fill="#eee" stroke="#888"/><path d="M1290 474h8c3 0 3-4 6-4h6" fill="none" stroke="#e04040" stroke-width="1.200"/><path d="M1290 471h8c3 0 3-4 6-4h6" fill="none" stroke="#2b8fe0" stroke-width="1.200"/>
</g>

<!-- tooltip -->
<rect x="867" y="205" width="416" height="427" rx="10" fill="#505050"/>
<text x="885" y="244" class="tt" textLength="368">Coloca los componentes en relación unos con otros y define</text>
<text x="885" y="259" class="tt" textLength="143">el movimiento relativo.</text>
<text x="885" y="289" class="tt" textLength="372">Seleccione la geometría o los orígenes de unión para definir</text>
<text x="885" y="304" class="tt" textLength="336">la unión. Especifique el tipo para definir el movimiento</text>
<text x="885" y="319" class="tt" textLength="51">relativo.</text>
<text x="885" y="623" class="tt" style="font-size:13px" textLength="238">Pulse Ctrl+/ para obtener más ayuda.</text>

<g transform="translate(860 330) scale(.33333)">
<!-- handle 1 -->
<path d="M600 80L752 188L738 244L705 250L570 160Z" fill="#22344d"/>
<path d="M705 250L738 244L752 188L748 200L730 238Z" fill="#1a2736"/>
<path d="M545 125C545 90 572 68 605 74C628 78 640 90 635 100C612 105 598 135 594 172C565 168 545 150 545 125Z" fill="#4b7db6"/>
<!-- lever -->
<path d="M470 205C472 190 490 185 505 190L672 295L640 335L490 240C478 232 470 220 470 205Z" fill="#3f3e3a"/>
<path d="M470 205C472 190 490 185 505 190C498 200 495 225 490 240C478 232 470 220 470 205Z" fill="#bdbdb5"/>
<path d="M640 330L675 300L688 312L655 350Z" fill="#e8e8e2"/>
<path d="M660 340L690 310L720 340L735 355L700 380Z" fill="#4a4a44"/>
<!-- pin -->
<path d="M240 430L450 360C458 360 460 392 452 392L245 460Z" fill="url(#rod)"/>
<path d="M180 430C200 405 235 415 242 445C240 470 225 475 205 465Z" fill="#a8a8a0"/>
<path d="M95 408L120 405L235 470L242 480V518L222 525L100 465C90 460 88 420 95 408Z" fill="#65655d"/>
<path d="M222 478L242 475V518L222 525Z" fill="#44443e"/>
<!-- clamp 1 -->
<path d="M560 380L700 350L765 395L730 455L640 480L560 450Z" fill="#4a4943"/>
<path d="M490 470L555 450L640 470L575 520L560 540L500 490Z" fill="#3f3e38"/>
<path d="M500 420L565 395L575 450L495 490C450 490 430 440 450 425Z" fill="#63625a"/>
<ellipse cx="465" cy="455" rx="27" ry="33" fill="#77766e" transform="rotate(-18 465 455)"/><ellipse cx="466" cy="455" rx="16" ry="22" fill="#3f3e36" transform="rotate(-18 466 455)"/>
<path d="M570 525L720 462L773 478V495L640 552L595 545Z" fill="#62615a"/><path d="M615 520L735 478L745 485L625 528Z" fill="#2d2c27"/>
<path d="M620 340L636 332L650 385L635 395ZM645 345L660 335L675 385L660 395Z" fill="#d5d5cd"/>
<path d="M570 410L600 400L610 430L590 445Z" fill="#c9c9c1"/><circle cx="610" cy="425" r="12" fill="#666"/>
<circle cx="735" cy="370" r="14" fill="#5f5e58"/><circle cx="712" cy="385" r="10" fill="#6a6962"/>
<path d="M660 360V470M733 285V345" stroke="#7fb6c9" stroke-width="1.500"/><path d="M648 465L664 450V468Z" fill="#5fc3d0"/><path d="M727 275L741 273L732 290Z" fill="#3ab0c8"/>
<!-- handle 2 -->
<path d="M900 290L1050 385L1020 450L895 395Z" fill="#22344d"/>
<path d="M850 330C850 298 880 275 915 280C938 285 950 292 945 302C918 308 902 340 900 385C870 380 850 355 850 330Z" fill="#4b7db6"/>
<rect x="893" y="322" width="37" height="22" fill="#7f9aa6" opacity=".8"/>
<path d="M1030 450L1060 415L1085 438L1055 472Z" fill="#e8e8e2"/>
<path d="M1065 410L1100 455L1150 470L1130 520L1050 480Z" fill="#4a4a44"/>
<!-- clamp 2 -->
<path d="M950 510L1060 480L1150 480L1155 520L1085 580L950 560Z" fill="#4a4943"/>
<path d="M860 640L950 580L1050 620L960 680L930 690Z" fill="#3f3e38"/>
<path d="M860 555L950 525L970 590L880 640C840 640 810 585 830 570Z" fill="#63625a"/>
<ellipse cx="855" cy="595" rx="30" ry="42" fill="#77766e" transform="rotate(-20 855 595)"/>
<path d="M755 625L870 575L885 600L770 660Z" fill="url(#rod)"/>
<path d="M960 672L1130 595L1172 622V640L1030 700L985 690Z" fill="#62615a"/><path d="M1010 665L1125 610L1142 620L1020 675Z" fill="#2d2c27"/>
<path d="M1005 460L1030 458L1048 515L1025 525ZM1050 470L1075 460L1090 510L1065 520Z" fill="#77766e"/>
<circle cx="1000" cy="550" r="14" fill="#b5b5ad"/><circle cx="1100" cy="510" r="12" fill="#6a6962"/><circle cx="1135" cy="485" r="13" fill="#666"/>
<path d="M720 590V660M975 470V545M1088 520V600M1115 400V495" stroke="#7fb6c9" stroke-width="1.500"/>
<path d="M708 568L726 570L720 585Z" fill="#d88ca8"/><path d="M975 455L988 460L978 470Z" fill="#3ab0c8"/><path d="M1116 395L1130 398L1120 408Z" fill="#3ab0c8"/><path d="M1078 598L1092 590V606Z" fill="#3ab0c8"/>
<!-- plate 2 -->
<path d="M722 625C735 610 760 625 770 660C768 675 755 680 735 670Z" fill="#b9b9b1"/>
<path d="M595 615L622 612L765 680L775 695V735L752 745L600 670C585 660 585 625 595 615Z" fill="#65655d"/>
<path d="M752 690L775 682V735L752 745Z" fill="#44443e"/>
<path d="M680 680L722 660" stroke="#3fbf60" stroke-width="2"/><path d="M670 680L684 676L678 694Z" fill="#3fbf60"/><circle cx="722" cy="660" r="7" fill="none" stroke="#d85a5a" stroke-width="1.500"/><path d="M745 660L760 655V672Z" fill="#3ab0c8"/>
</g>
</svg>
</body></html>
